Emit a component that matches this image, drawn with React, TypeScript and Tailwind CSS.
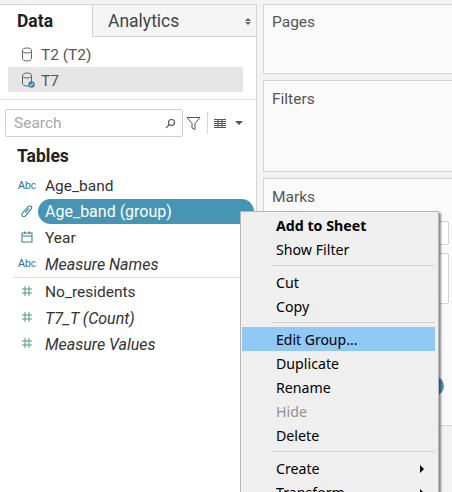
import { ReactNode } from 'react';

const UI = "font-['Roboto',sans-serif]";
const MENU = "font-['Noto_Sans',sans-serif]";

function Cylinder({ check }: { check?: boolean }) {
  return (
    <svg width="14" height="16" viewBox="0 0 14 16" fill="none" stroke="#666" strokeWidth="1">
      <ellipse cx="6" cy="3.5" rx="4.5" ry="2.5" />
      <path d="M1.5 3.5v8c0 1.4 2 2.5 4.5 2.5M10.5 3.5v8c0 1.4-2 2.5-4.5 2.5" />
      {check && (
        <>
          <circle cx="10.5" cy="12.5" r="3.2" fill="#3b87ab" stroke="none" />
          <path d="M8.9 12.5l1.2 1.2 2-2.2" stroke="#fff" />
        </>
      )}
    </svg>
  );
}

function Abc() {
  return <span className="text-[10.5px] leading-none text-[#2f6f8f] font-['Liberation_Sans',sans-serif]">Abc</span>;
}

function Hash() {
  return (
    <svg width="12" height="12" viewBox="0 0 12 12" fill="none" stroke="#4f9a87" strokeWidth="1">
      <path d="M4 1v10M8 1v10M1 4h10M1 8h10" />
    </svg>
  );
}

function Clip() {
  return (
    <svg width="14" height="14" viewBox="0 0 14 14" fill="none" stroke="#3f7f9f" strokeWidth="1.1">
      <path d="M3 8.5l4.8-5.6c1-1.1 2.5-1.2 3.3-.4.8.8.6 2.1-.4 3.2L6 11.4c-1.2 1.3-2.8 1.5-3.6.8-.8-.8-.6-2.2.5-3.5l4.6-5.3" />
      <path d="M5.2 8.8l3.9-4.5" />
    </svg>
  );
}

function Calendar() {
  return (
    <svg width="12" height="12" viewBox="0 0 12 12" fill="none" stroke="#2f7f8f" strokeWidth="1">
      <rect x="1" y="2" width="10" height="9" />
      <path d="M1 5h10M3.5 0.5v2.5M8.5 0.5v2.5" />
    </svg>
  );
}

function FieldRow({ icon, children, italic }: { icon: ReactNode; children: ReactNode; italic?: boolean }) {
  return (
    <div className="flex h-[26px] items-center">
      <div className="flex w-[45px] shrink-0 items-center justify-center pl-[14px] pr-[5px]">{icon}</div>
      <span className={`pt-1 text-[#333] ${italic ? 'text-[16px] italic' : 'text-[15.5px]'}`}>{children}</span>
    </div>
  );
}

function MenuItem({ label, bold, disabled, arrow }: { label: string; bold?: boolean; disabled?: boolean; arrow?: boolean }) {
  return (
    <div className={`flex h-6 items-center justify-between pl-[35px] pr-[14px] text-[14.2px] ${bold ? 'font-bold' : ''} ${disabled ? 'text-[#8f8f8f]' : 'text-black'}`}>
      <span>{label}</span>
      {arrow && <span className="h-0 w-0 border-y-[4px] border-l-[4px] border-y-transparent border-l-black" />}
    </div>
  );
}

function MenuLine({ className }: { className: string }) {
  return <div className={`ml-[31px] mr-[3px] h-px bg-[#d2d2d2] ${className}`} />;
}

function Card({ title, className }: { title: string; className: string }) {
  return (
    <div className={`border border-r-0 border-[#d4d4d4] bg-[#fafafa] pl-2 text-[15.5px] text-[#555] ${className}`}>{title}</div>
  );
}

export default function App() {
  return (
    <div className={`relative h-[492px] w-[452px] overflow-hidden bg-[#f3f3f3] pt-1 ${UI}`}>
      <div className="flex h-full">
        {/* Data pane */}
        <div className="h-full w-[257px] shrink-0 border-r border-t border-[#d4d4d4] bg-white">
          <div className="flex h-[32px]">
            <div className="flex w-[92px] items-center pl-[17px] text-[17.5px] font-bold text-[#222]">Data</div>
            <div className="flex flex-1 items-center justify-between border-b border-l border-[#d4d4d4] bg-[#f5f5f5] pl-[15px] pr-[5px] pt-[2px] text-[17.5px] text-[#444]">
              <span>Analytics</span>
              <span className="flex flex-col gap-[1px]">
                <span className="h-0 w-0 border-x-[3px] border-b-[3px] border-x-transparent border-b-[#666]" />
                <span className="h-0 w-0 border-x-[3px] border-t-[3px] border-x-transparent border-t-[#666]" />
              </span>
            </div>
          </div>

          <div className="border-b border-[#e2e2e2] pb-[7px] pt-[5px]">
            <div className="flex h-[25px] items-center gap-[6px] pl-[21px] text-[15.5px] text-[#555]">
              <Cylinder />
              <span className="pt-[2px]">T2 (T2)</span>
            </div>
            <div className="ml-2 mr-[13px] flex h-[25px] items-center gap-[6px] bg-[#e6e6e6] pl-[13px] text-[15.5px] text-[#555]">
              <Cylinder check />
              <span className="pt-1">T7</span>
            </div>
          </div>

          <div className="mt-[9px] flex items-center pl-[5px]">
            <div className="flex h-[28px] w-[178px] items-center justify-between rounded-[2px] border border-[#cfcfcf] pl-2 pr-[6px] text-[15.5px] text-[#a8a8a8]">
              <span className="pt-[2px]">Search</span>
              <svg width="11" height="11" viewBox="0 0 11 11" fill="none" stroke="#555" strokeWidth="1.1">
                <circle cx="6.5" cy="4.5" r="3" />
                <path d="M4.3 6.7L1 10" />
              </svg>
            </div>
            <svg className="ml-[3px]" width="15" height="15" viewBox="0 0 15 15" fill="none" stroke="#555" strokeWidth="1">
              <path d="M1 1.5h13L9 7.5v6L6 12V7.5z" />
            </svg>
            <div className="ml-[6px] h-[22px] w-px bg-[#d4d4d4]" />
            <svg className="ml-[6px]" width="12" height="9" viewBox="0 0 12 9" fill="none" stroke="#555" strokeWidth="1">
              <path d="M0 .5h12M0 2.5h12M0 4.5h12M0 6.5h12M0 8.5h12M4 0v9M8 0v9" />
            </svg>
            <span className="ml-[9px] h-0 w-0 border-x-[4px] border-t-[4px] border-x-transparent border-t-[#555]" />
          </div>

          <div className="mb-[3px] mt-[6px] pl-[17px] text-[17.5px] font-bold leading-[26px] text-[#222]">Tables</div>

          <div>
            <FieldRow icon={<Abc />}>Age_band</FieldRow>
            <div className="flex h-[26px] items-center">
              <div className="flex w-[38px] shrink-0 items-center justify-center pl-[17px] pr-[1px]">
                <Clip />
              </div>
              <div className="flex h-[25px] w-[216px] items-center rounded-full bg-[#4795b4] pl-[7px] pt-[2px] text-[16px] text-white">
                Age_band (group)
              </div>
            </div>
            <FieldRow icon={<Calendar />}>Year</FieldRow>
            <FieldRow icon={<Abc />} italic>
              Measure Names
            </FieldRow>
          </div>
          <div className="ml-[13px] mt-[1px] h-px bg-[#dedede]" />
          <div>
            <FieldRow icon={<Hash />}>No_residents</FieldRow>
            <FieldRow icon={<Hash />} italic>
              T7_T (Count)
            </FieldRow>
            <FieldRow icon={<Hash />} italic>
              Measure Values
            </FieldRow>
          </div>
        </div>

        {/* Shelves */}
        <div className="flex flex-1 flex-col pl-[6px]">
          <Card title="Pages" className="h-[70px] pt-[6px]" />
          <Card title="Filters" className="mt-[6px] h-[92px] pt-[7px]" />
          <div className="mt-[6px] h-[248px] border border-r-0 border-[#d4d4d4] bg-[#fafafa] pl-2 pr-[3px] pt-[7px] text-[15.5px] text-[#555]">
            <div className="h-[22px]">Marks</div>
            <div className="ml-auto mt-[13px] h-[24px] w-[30px] rounded-[2px] border border-[#d4d4d4] bg-white" />
            <div className="ml-auto mt-2 h-[51px] w-[30px] rounded-[2px] border border-[#d4d4d4] bg-white" />
            <div className="ml-auto mr-[5px] mt-[72px] h-5 w-5 rounded-full bg-[#4795b4]" />
          </div>
          <div className="flex-1" />
        </div>
      </div>

      {/* Context menu */}
      <div className={`absolute left-[240px] top-[211px] h-[300px] w-[199px] border border-[#b5b5b5] bg-[#efefef] pt-[2px] shadow-[2px_2px_2px_rgba(0,0,0,0.45)] ${MENU}`}>
        <MenuItem label="Add to Sheet" bold />
        <MenuItem label="Show Filter" />
        <MenuLine className="mb-[5px] mt-[3px]" />
        <MenuItem label="Cut" />
        <MenuItem label="Copy" />
        <MenuLine className="mb-[4px] mt-[3px]" />
        <div className="mb-px ml-px mr-[3px] flex h-6 items-center bg-[#90c8f6] pl-[34px] text-[14px] text-black">Edit Group...</div>
        <MenuItem label="Duplicate" />
        <MenuItem label="Rename" />
        <MenuItem label="Hide" disabled />
        <MenuItem label="Delete" />
        <MenuLine className="mb-[5px] mt-[3px]" />
        <MenuItem label="Create" arrow />
        <MenuItem label="Transform" arrow />
      </div>
    </div>
  );
}
